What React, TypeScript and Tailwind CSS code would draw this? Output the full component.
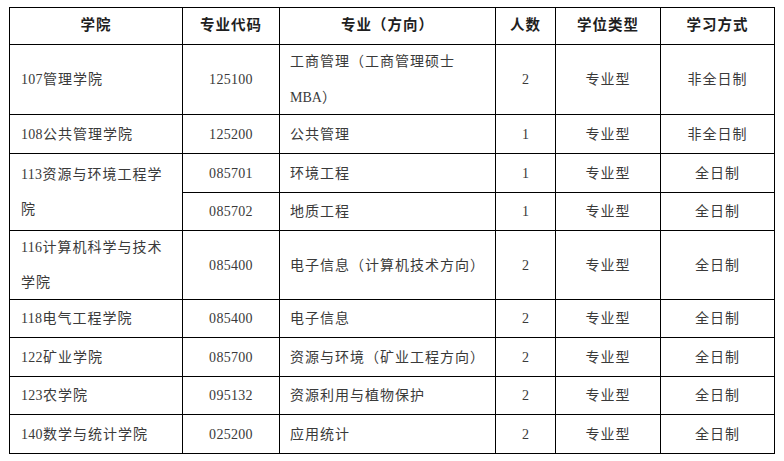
import React from "react";

type Row = {
  h: string;
  college?: React.ReactNode;
  span?: boolean;
  skipCollege?: boolean;
  code: string;
  major: React.ReactNode;
  num: string;
  type: string;
  mode: string;
};

const N = ({ children }: { children: React.ReactNode }) => (
  <span className="tracking-[0.3px]">{children}</span>
);

const rows: Row[] = [
  {
    h: "h-[70px]",
    college: (
      <>
        <N>107</N>管理学院
      </>
    ),
    code: "125100",
    major: (
      <span className="leading-[36px]">
        工商管理（工商管理硕士
        <br />
        <span className="tracking-normal">MBA</span>）
      </span>
    ),
    num: "2",
    type: "专业型",
    mode: "非全日制",
  },
  {
    h: "h-[39px]",
    college: (
      <>
        <N>108</N>公共管理学院
      </>
    ),
    code: "125200",
    major: "公共管理",
    num: "1",
    type: "专业型",
    mode: "非全日制",
  },
  {
    h: "h-[39px]",
    college: (
      <span className="leading-[35px]">
        <N>113</N>资源与环境工程学
        <br />院
      </span>
    ),
    span: true,
    code: "085701",
    major: "环境工程",
    num: "1",
    type: "专业型",
    mode: "全日制",
  },
  {
    h: "h-[38px]",
    skipCollege: true,
    code: "085702",
    major: "地质工程",
    num: "1",
    type: "专业型",
    mode: "全日制",
  },
  {
    h: "h-[69px]",
    college: (
      <span className="leading-[35px]">
        <N>116</N>计算机科学与技术
        <br />
        学院
      </span>
    ),
    code: "085400",
    major: "电子信息（计算机技术方向）",
    num: "2",
    type: "专业型",
    mode: "全日制",
  },
  {
    h: "h-[38px]",
    college: (
      <>
        <N>118</N>电气工程学院
      </>
    ),
    code: "085400",
    major: "电子信息",
    num: "2",
    type: "专业型",
    mode: "全日制",
  },
  {
    h: "h-[39px]",
    college: (
      <>
        <N>122</N>矿业学院
      </>
    ),
    code: "085700",
    major: "资源与环境（矿业工程方向）",
    num: "2",
    type: "专业型",
    mode: "全日制",
  },
  {
    h: "h-[38px]",
    college: (
      <>
        <N>123</N>农学院
      </>
    ),
    code: "095132",
    major: "资源利用与植物保护",
    num: "2",
    type: "专业型",
    mode: "全日制",
  },
  {
    h: "h-[39px]",
    college: (
      <>
        <N>140</N>数学与统计学院
      </>
    ),
    code: "025200",
    major: "应用统计",
    num: "2",
    type: "专业型",
    mode: "全日制",
  },
];

const cell = "border-r border-b border-black flex items-center";

export default function App() {
  return (
    <div
      className="w-[784px] h-[461px] bg-white pt-[7px] pl-[9px]"
      style={{ fontFamily: '"Liberation Serif", "Noto Sans CJK SC", serif' }}
    >
      <div className="grid grid-cols-[173px_97px_216px_60px_105px_114px] w-[766px] border-t border-l border-black text-[14px] text-[#3a3a3a] tracking-[1px]">
        {/* header */}
        {["学院", "专业代码", "专业（方向）", "人数", "学位类型", "学习方式"].map((t) => (
          <div
            key={t}
            className={`${cell} h-[37px] justify-center font-bold text-[#1f1f1f] text-[14.5px]`}
          >
            {t}
          </div>
        ))}
        {rows.map((r, i) => (
          <React.Fragment key={i}>
            {!r.skipCollege && (
              <div
                className={`${cell} pl-[11px] ${r.span ? "row-span-2" : r.h}`}
              >
                {r.college}
              </div>
            )}
            <div className={`${cell} ${r.h} justify-center tracking-[0.3px]`}>{r.code}</div>
            <div className={`${cell} ${r.h} pl-[10px]`}>{r.major}</div>
            <div className={`${cell} ${r.h} justify-center tracking-normal`}>{r.num}</div>
            <div className={`${cell} ${r.h} justify-center`}>{r.type}</div>
            <div className={`${cell} ${r.h} justify-center`}>{r.mode}</div>
          </React.Fragment>
        ))}
      </div>
    </div>
  );
}
